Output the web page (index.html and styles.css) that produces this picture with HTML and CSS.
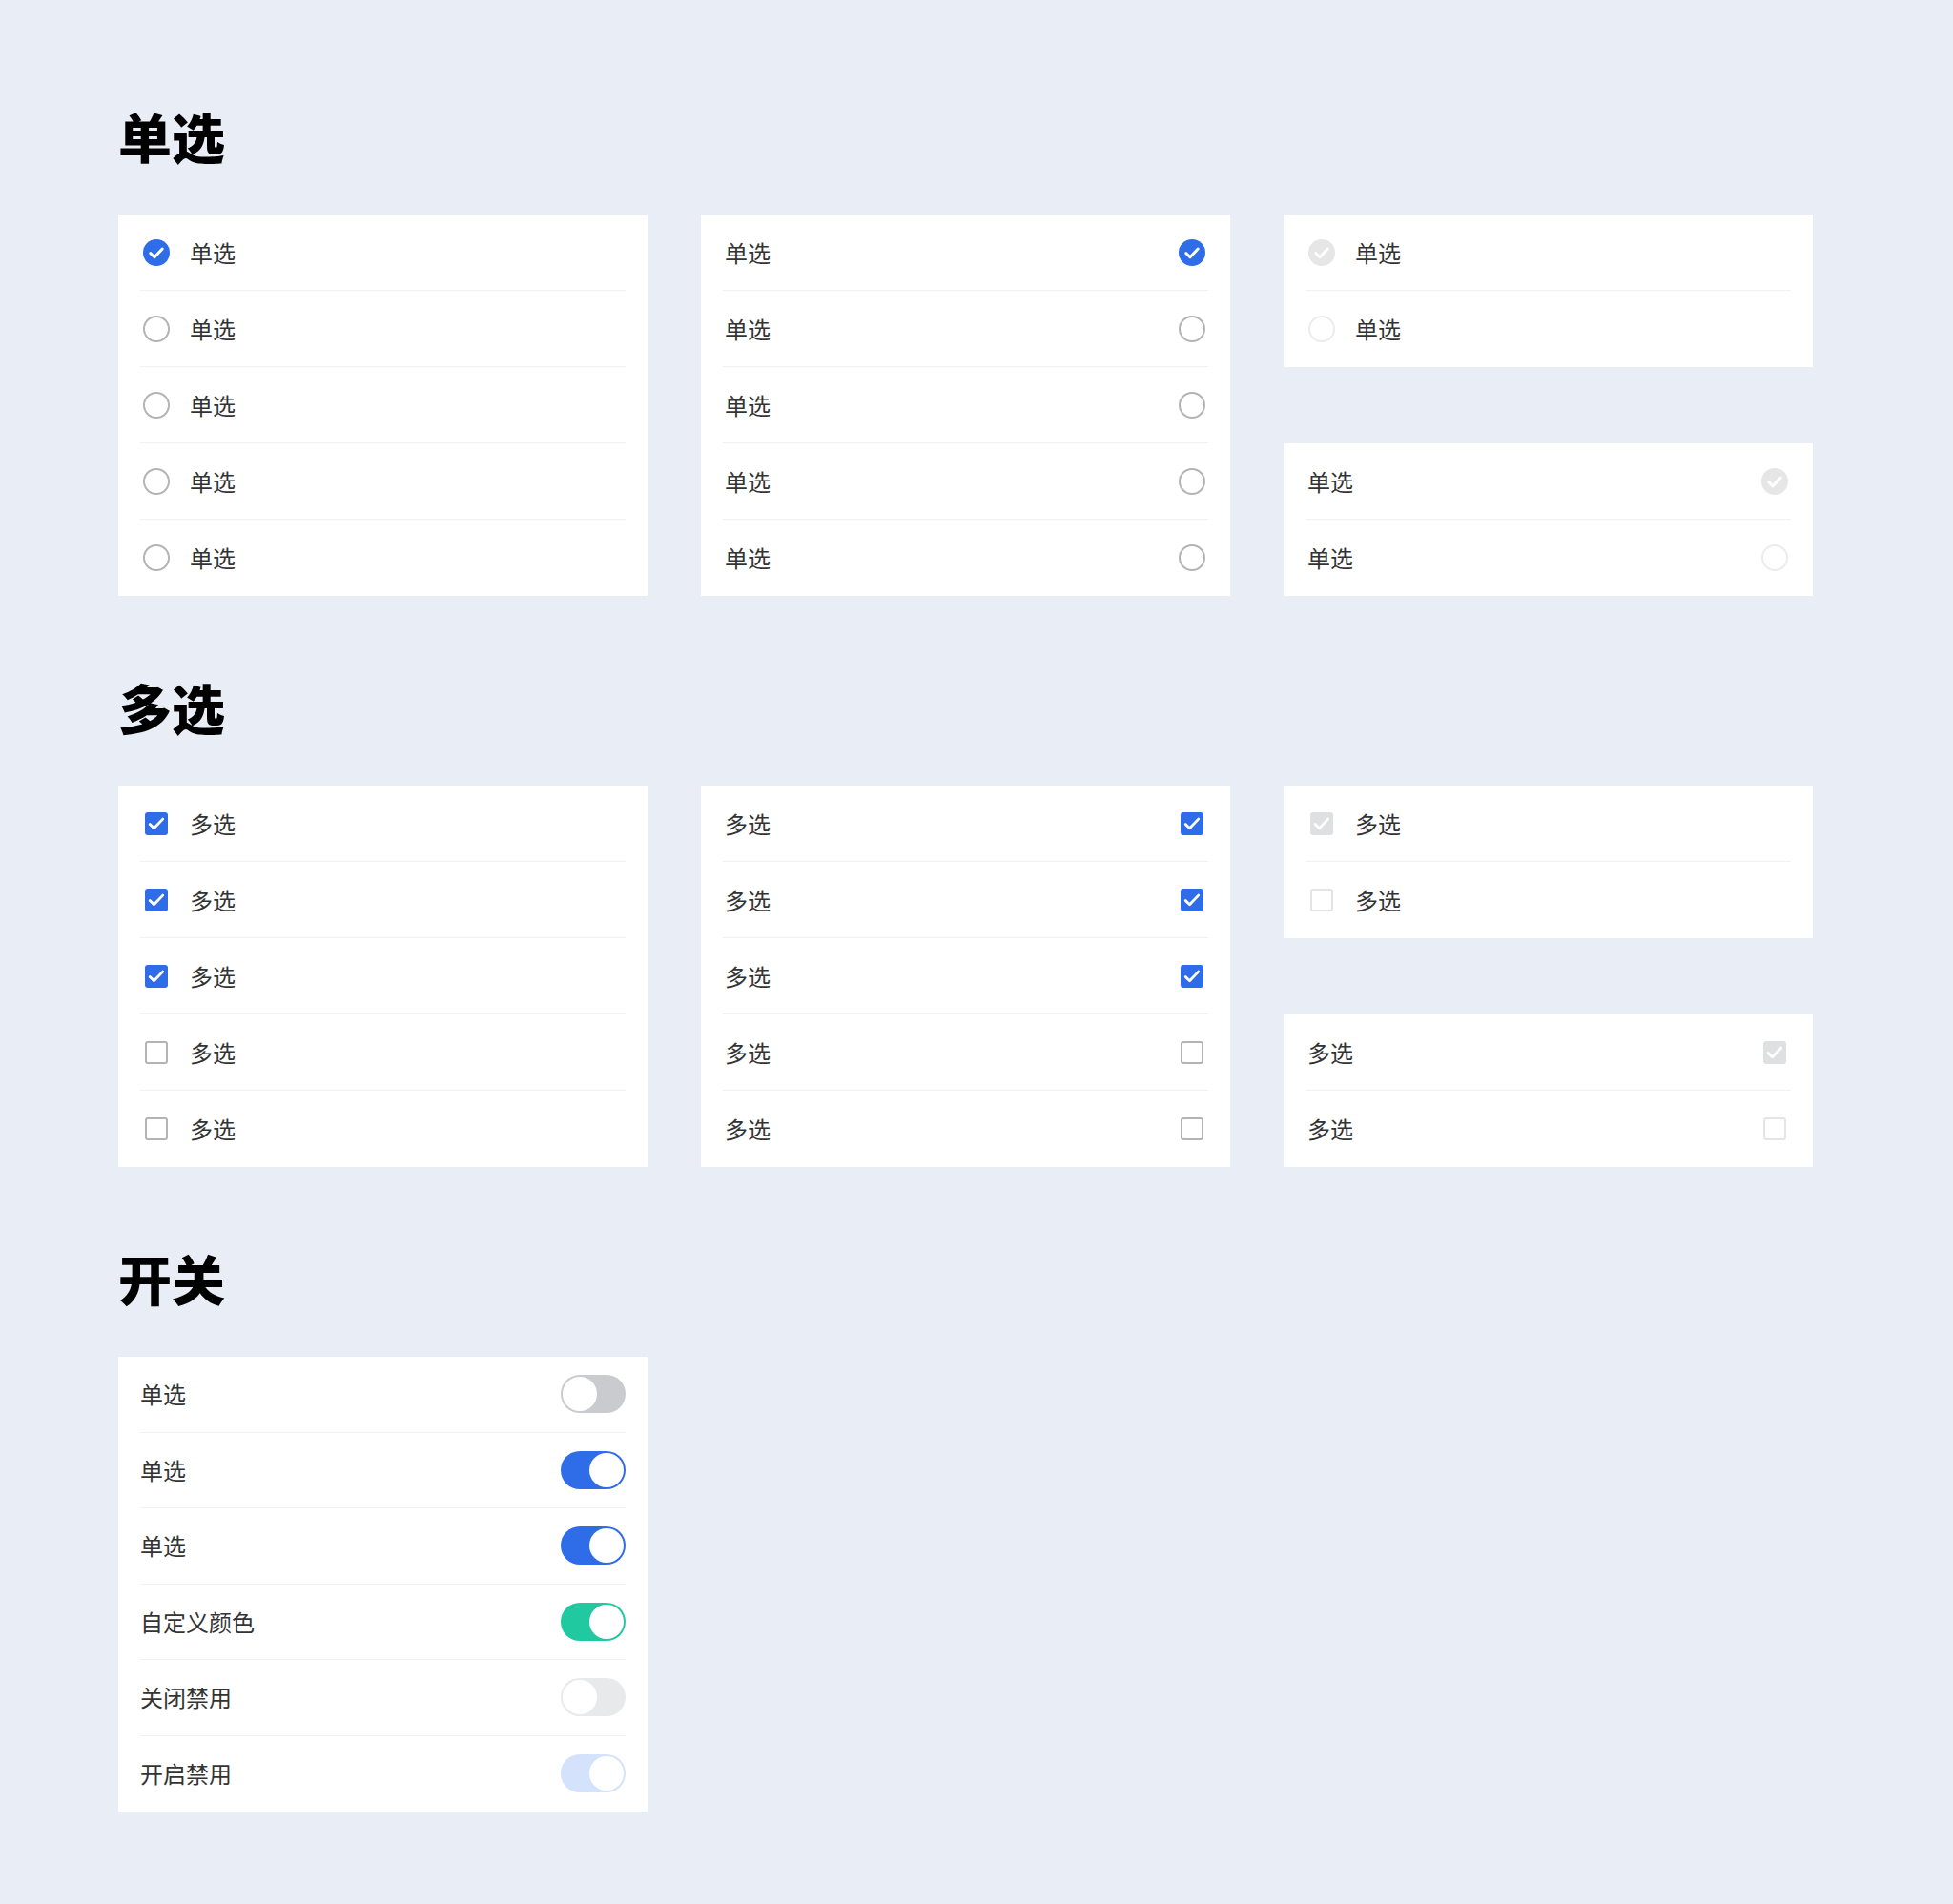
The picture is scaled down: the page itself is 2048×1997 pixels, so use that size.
FILE: index.html
```html
<!DOCTYPE html>
<html lang="zh-CN">
<head>
    <meta charset="utf-8">
    <title>表单控件</title>
    <link rel="stylesheet" href="styles.css">
</head>
<body>
    <div class="page">
        <!-- 单选 -->
        <h2 class="section-title">单选</h2>
        <div class="grid">
            <div class="card">
                <div class="row"><span class="icon"><span class="radio checked"><svg viewBox="0 0 28 28"><path d="M7.8 14.6l4.2 4.2 8.2-8.8"/></svg></span></span><span class="label">单选</span></div>
                <div class="row"><span class="icon"><span class="radio"></span></span><span class="label">单选</span></div>
                <div class="row"><span class="icon"><span class="radio"></span></span><span class="label">单选</span></div>
                <div class="row"><span class="icon"><span class="radio"></span></span><span class="label">单选</span></div>
                <div class="row"><span class="icon"><span class="radio"></span></span><span class="label">单选</span></div>
            </div>
            <div class="card">
                <div class="row row-right"><span class="label">单选</span><span class="icon"><span class="radio checked"><svg viewBox="0 0 28 28"><path d="M7.8 14.6l4.2 4.2 8.2-8.8"/></svg></span></span></div>
                <div class="row row-right"><span class="label">单选</span><span class="icon"><span class="radio"></span></span></div>
                <div class="row row-right"><span class="label">单选</span><span class="icon"><span class="radio"></span></span></div>
                <div class="row row-right"><span class="label">单选</span><span class="icon"><span class="radio"></span></span></div>
                <div class="row row-right"><span class="label">单选</span><span class="icon"><span class="radio"></span></span></div>
            </div>
            <div class="stack">
                <div class="card">
                    <div class="row"><span class="icon"><span class="radio checked disabled"><svg viewBox="0 0 28 28"><path d="M7.8 14.6l4.2 4.2 8.2-8.8"/></svg></span></span><span class="label">单选</span></div>
                    <div class="row"><span class="icon"><span class="radio disabled"></span></span><span class="label">单选</span></div>
                </div>
                <div class="card">
                    <div class="row row-right"><span class="label">单选</span><span class="icon"><span class="radio checked disabled"><svg viewBox="0 0 28 28"><path d="M7.8 14.6l4.2 4.2 8.2-8.8"/></svg></span></span></div>
                    <div class="row row-right"><span class="label">单选</span><span class="icon"><span class="radio disabled"></span></span></div>
                </div>
            </div>
        </div>

        <!-- 多选 -->
        <h2 class="section-title">多选</h2>
        <div class="grid">
            <div class="card">
                <div class="row"><span class="icon"><span class="checkbox checked"><svg viewBox="0 0 24 24"><path d="M5.2 12.4l4.3 4.3 9.2-9.6"/></svg></span></span><span class="label">多选</span></div>
                <div class="row"><span class="icon"><span class="checkbox checked"><svg viewBox="0 0 24 24"><path d="M5.2 12.4l4.3 4.3 9.2-9.6"/></svg></span></span><span class="label">多选</span></div>
                <div class="row"><span class="icon"><span class="checkbox checked"><svg viewBox="0 0 24 24"><path d="M5.2 12.4l4.3 4.3 9.2-9.6"/></svg></span></span><span class="label">多选</span></div>
                <div class="row"><span class="icon"><span class="checkbox"></span></span><span class="label">多选</span></div>
                <div class="row"><span class="icon"><span class="checkbox"></span></span><span class="label">多选</span></div>
            </div>
            <div class="card">
                <div class="row row-right"><span class="label">多选</span><span class="icon"><span class="checkbox checked"><svg viewBox="0 0 24 24"><path d="M5.2 12.4l4.3 4.3 9.2-9.6"/></svg></span></span></div>
                <div class="row row-right"><span class="label">多选</span><span class="icon"><span class="checkbox checked"><svg viewBox="0 0 24 24"><path d="M5.2 12.4l4.3 4.3 9.2-9.6"/></svg></span></span></div>
                <div class="row row-right"><span class="label">多选</span><span class="icon"><span class="checkbox checked"><svg viewBox="0 0 24 24"><path d="M5.2 12.4l4.3 4.3 9.2-9.6"/></svg></span></span></div>
                <div class="row row-right"><span class="label">多选</span><span class="icon"><span class="checkbox"></span></span></div>
                <div class="row row-right"><span class="label">多选</span><span class="icon"><span class="checkbox"></span></span></div>
            </div>
            <div class="stack">
                <div class="card">
                    <div class="row"><span class="icon"><span class="checkbox checked disabled"><svg viewBox="0 0 24 24"><path d="M5.2 12.4l4.3 4.3 9.2-9.6"/></svg></span></span><span class="label">多选</span></div>
                    <div class="row"><span class="icon"><span class="checkbox disabled"></span></span><span class="label">多选</span></div>
                </div>
                <div class="card">
                    <div class="row row-right"><span class="label">多选</span><span class="icon"><span class="checkbox checked disabled"><svg viewBox="0 0 24 24"><path d="M5.2 12.4l4.3 4.3 9.2-9.6"/></svg></span></span></div>
                    <div class="row row-right"><span class="label">多选</span><span class="icon"><span class="checkbox disabled"></span></span></div>
                </div>
            </div>
        </div>

        <!-- 开关 -->
        <h2 class="section-title">开关</h2>
        <div class="grid">
            <div class="card switch-card">
                <div class="row row-right"><span class="label">单选</span><span class="switch"></span></div>
                <div class="row row-right"><span class="label">单选</span><span class="switch on"></span></div>
                <div class="row row-right"><span class="label">单选</span><span class="switch on"></span></div>
                <div class="row row-right"><span class="label">自定义颜色</span><span class="switch on custom"></span></div>
                <div class="row row-right"><span class="label">关闭禁用</span><span class="switch disabled"></span></div>
                <div class="row row-right"><span class="label">开启禁用</span><span class="switch on disabled"></span></div>
            </div>
        </div>
    </div>
</body>
</html>
```

FILE: styles.css
```css
/* 页面基础 */
body {
    margin: 0;
    background-color: #e9edf6;
    font-family: "Noto Sans CJK SC", "Noto Sans", sans-serif;
    color: #333;
}

.page {
    padding: 114px 0 60px 124px;
}

.section-title {
    margin: 0 0 55px;
    font-size: 56px;
    line-height: 56px;
    font-weight: 900;
    color: #000;
}

.grid {
    display: grid;
    grid-template-columns: repeat(3, 555px);
    column-gap: 56px;
    align-items: start;
    margin-bottom: 88px;
}

.stack {
    display: flex;
    flex-direction: column;
    gap: 80px;
}

/* 卡片与行 */
.card {
    background-color: #fff;
    padding: 0 23px;
}

.row {
    display: flex;
    align-items: center;
    gap: 20px;
    height: 80px;
    padding: 0 2px;
    box-sizing: border-box;
    border-bottom: 1px solid #f0f1f3;
}

.row:last-child {
    border-bottom: none;
}

.row-right {
    justify-content: space-between;
}

.label {
    font-size: 24px;
    line-height: 1;
}

.icon {
    display: flex;
    align-items: center;
    justify-content: center;
    width: 30px;
    height: 30px;
    flex-shrink: 0;
}

.icon svg {
    display: block;
    width: 100%;
    height: 100%;
    fill: none;
    stroke: #fff;
    stroke-linecap: round;
    stroke-linejoin: round;
}

/* 单选 */
.radio {
    width: 28px;
    height: 28px;
    border-radius: 50%;
    border: 2px solid #b4b4b4;
    box-sizing: border-box;
}

.radio svg {
    stroke-width: 3;
}

.radio.checked {
    border: none;
    background-color: #2f6de8;
}

.radio.disabled {
    border-color: #ececec;
}

.radio.checked.disabled {
    background-color: #e6e6e6;
}

/* 多选 */
.checkbox {
    width: 24px;
    height: 24px;
    border-radius: 3px;
    border: 2px solid #b4b4b4;
    box-sizing: border-box;
}

.checkbox svg {
    stroke-width: 2.8;
}

.checkbox.checked {
    border: none;
    background-color: #2f6de8;
}

.checkbox.disabled {
    border-color: #e4e4e4;
}

.checkbox.checked.disabled {
    background-color: #dfe0e1;
}

/* 开关 */
.switch-card .row {
    height: 79.5px;
    padding: 0;
}

.switch {
    position: relative;
    width: 68px;
    height: 40px;
    border-radius: 20px;
    background-color: #c9cbcf;
    flex-shrink: 0;
}

.switch::after {
    content: "";
    position: absolute;
    top: 2px;
    left: 2px;
    width: 36px;
    height: 36px;
    border-radius: 50%;
    background-color: #fff;
    transition: left 0.2s ease;
}

.switch.on {
    background-color: #2f6de8;
}

.switch.on::after {
    left: 30px;
}

.switch.custom {
    background-color: #20c9a0;
}

.switch.disabled {
    background-color: #e8e9eb;
}

.switch.on.disabled {
    background-color: #d5e2fb;
}
```
